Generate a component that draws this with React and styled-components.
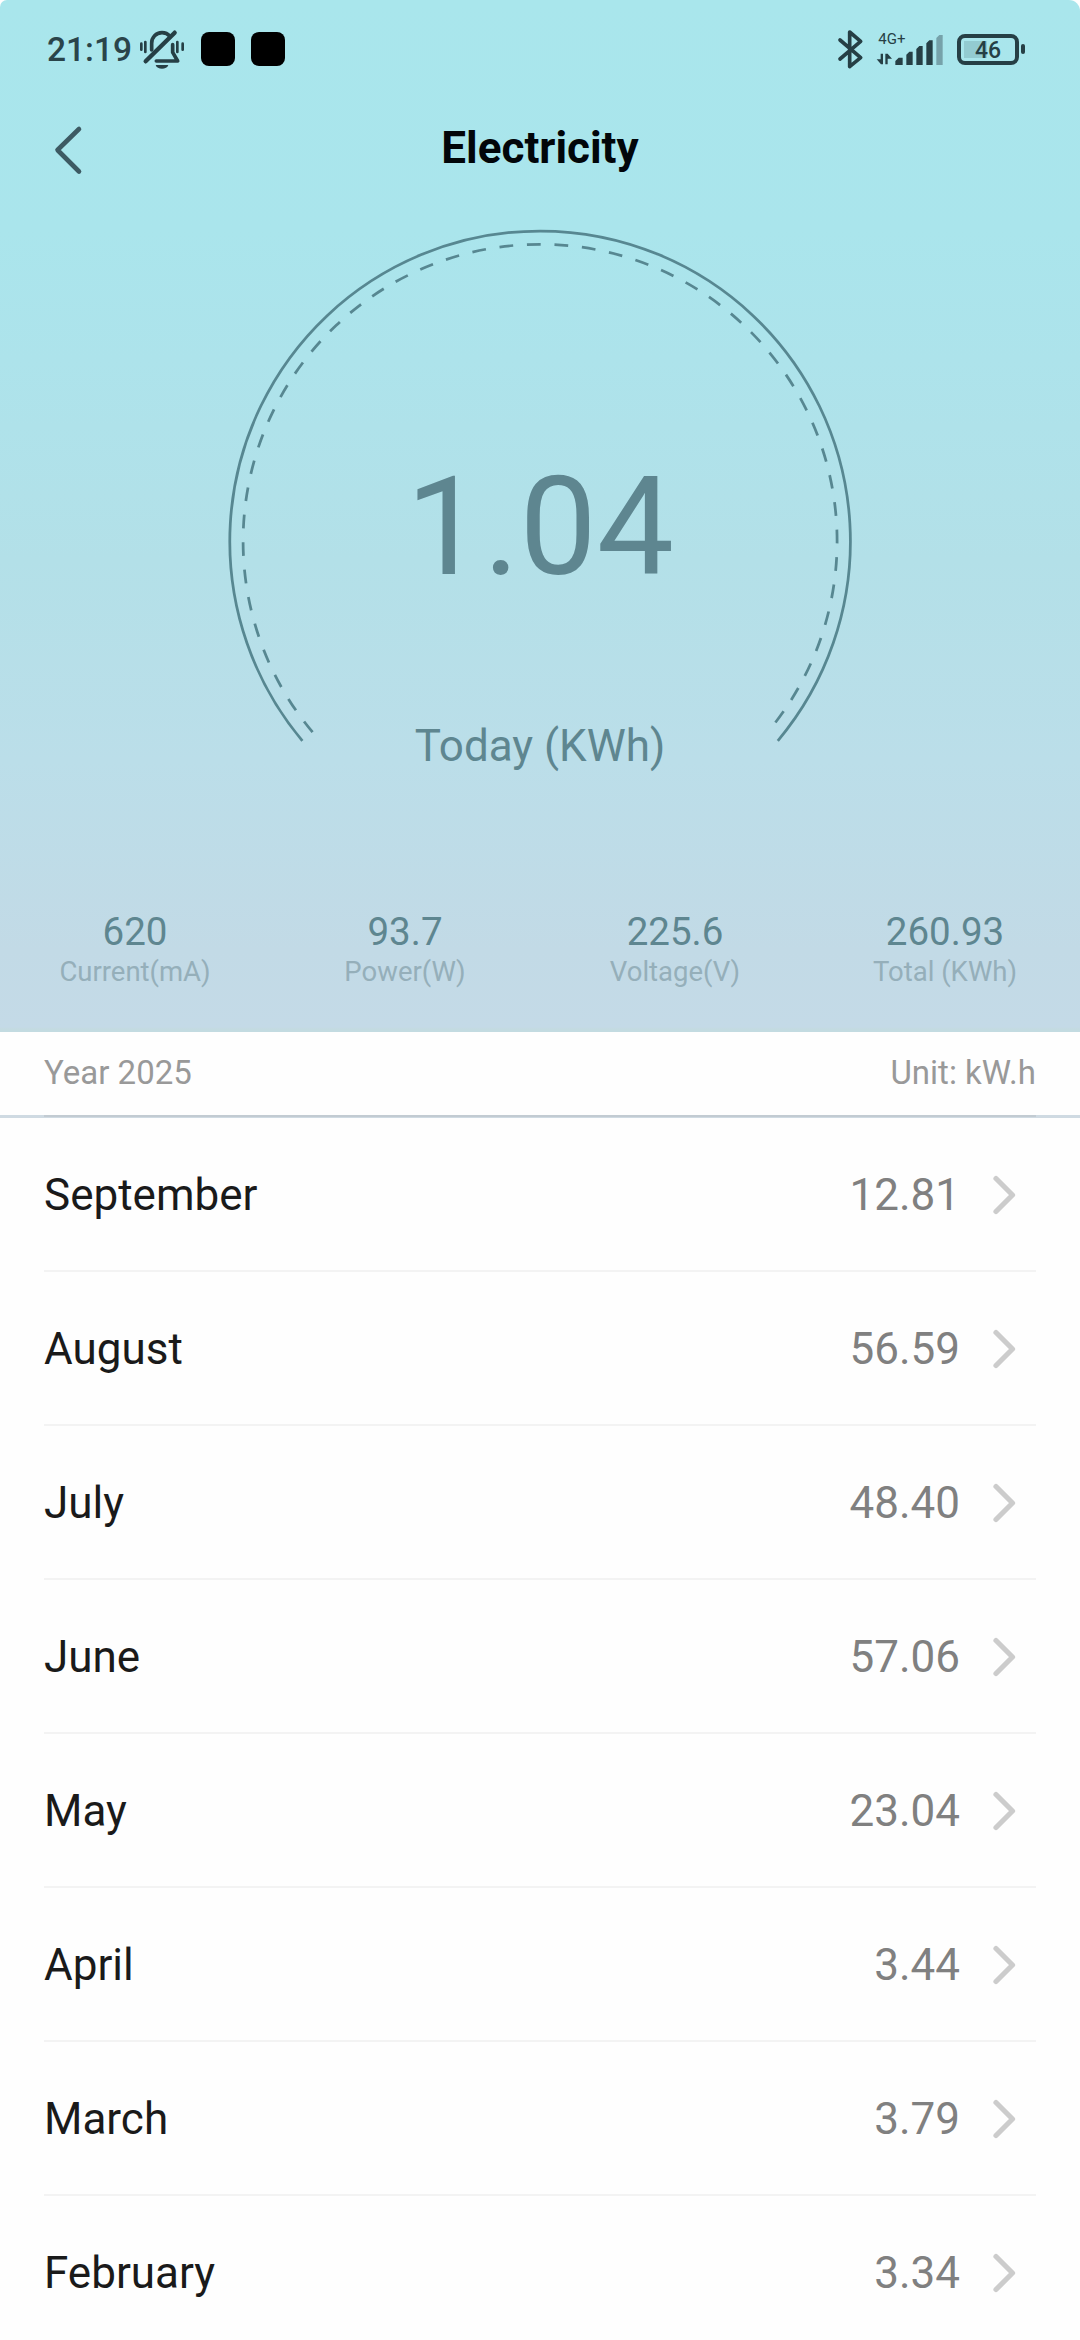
import React from 'react';
import styled, { createGlobalStyle } from 'styled-components';

const GlobalStyle = createGlobalStyle`
    body {
        margin: 0;
        background: #ffffff;
        font-family: Roboto, "Noto Sans", sans-serif;
    }
`;

const Screen = styled.div`
    width: 1080px;
    height: 2340px;
    overflow: hidden;
    background: #fefefe;
`;

const Hero = styled.header`
    display: flex;
    flex-direction: column;
    height: 1032px;
    border-radius: 7px 11px 0 0;
    background: linear-gradient(#a9e6ec 0, #aae5ec 230px, #ade3eb 360px, #b3e0e8 560px, #bbdee9 760px, #c2dae6 950px, #c4dae7 1027px, #c3dbe1 1029px);
`;

const StatusBar = styled.div`
    display: flex;
    justify-content: space-between;
    align-items: center;
    height: 98px;
    padding: 0 55px 0 47px;
    box-sizing: border-box;
`;

const StatusGroup = styled.div`
    display: flex;
    align-items: center;
`;

const Clock = styled.span`
    width: 92px;
    padding-top: 2px;
    font-size: 33.5px;
    font-weight: 500;
    line-height: 40px;
    color: #2a444a;
`;

const NotificationDot = styled.span`
    width: 34px;
    height: 34px;
    margin-left: 16px;
    border-radius: 8px;
    background: #000000;
`;

const StatusIcon = styled.svg`
    display: block;
    flex: none;
    overflow: visible;
    margin-left: ${(props) => props.$gap || 0}px;
`;

const Battery = styled.div`
    display: flex;
    align-items: center;
    margin-left: 13px;
`;

const BatteryBody = styled.div`
    width: 62px;
    height: 31px;
    box-sizing: border-box;
    border: 4px solid #263f45;
    border-radius: 8px;
    padding: 3px;
    font-size: 23px;
    font-weight: 500;
    line-height: 19px;
    text-align: center;
    color: #263f45;
    background: linear-gradient(#93cbd1, #93cbd1) 3px 3px / 23px 17px no-repeat;
`;

const BatteryTip = styled.div`
    width: 4px;
    height: 10px;
    margin-left: 2px;
    border-radius: 2px;
    background: #263f45;
`;

const TitleBar = styled.div`
    display: grid;
    grid-template-columns: 136px 1fr 136px;
    align-items: center;
    height: 100px;
`;

const BackButton = styled.button`
    display: flex;
    height: 100px;
    padding: 27px 0 0 53px;
    border: 0;
    background: none;
`;

const Title = styled.h1`
    margin: 0;
    font-size: 44px;
    font-weight: 700;
    line-height: 52px;
    text-align: center;
    color: #02060a;
`;

const Gauge = styled.div`
    display: grid;
    width: 626px;
    height: 681px;
    margin: 31px auto 0;

    > * {
        grid-area: 1 / 1;
    }
`;

const GaugeText = styled.div`
    padding-top: 218px;
    text-align: center;
    color: #5e8690;
`;

const Reading = styled.div`
    font-size: 137.5px;
    line-height: 160px;
`;

const ReadingLabel = styled.div`
    margin-top: 113px;
    font-size: 44px;
    line-height: 52px;
`;

const Stats = styled.div`
    display: grid;
    grid-template-columns: repeat(4, 1fr);
    text-align: center;
`;

const StatValue = styled.div`
    font-size: 38.5px;
    line-height: 44px;
    color: #5e8690;
`;

const StatLabel = styled.div`
    font-size: 27.5px;
    line-height: 36px;
    color: #95afba;
`;

const YearBar = styled.div`
    display: flex;
    justify-content: space-between;
    height: 83px;
    padding: 0 44px;
    font-size: 33px;
    line-height: 81px;
    color: #999999;
`;

const Divider = styled.div`
    height: 3px;
    padding: 0 44px;
    background: #cfdae2;

    &::after {
        content: '';
        display: block;
        height: 2px;
        background: #c2cbd2;
    }
`;

const MonthList = styled.ul`
    margin: 0;
    padding: 0 44px;
    list-style: none;
`;

const MonthRow = styled.li`
    display: flex;
    align-items: center;
    height: 154px;
    font-size: 44px;
    box-shadow: inset 0 -2px #f3f3f3;
`;

const MonthName = styled.span`
    flex: 1;
    color: #1a1a1a;
`;

const MonthValue = styled.span`
    margin-right: 32px;
    color: #808080;
`;

const Chevron = styled.svg`
    display: block;
    margin-right: 20px;
`;

const stats = [
    { value: '620', label: 'Current(mA)' },
    { value: '93.7', label: 'Power(W)' },
    { value: '225.6', label: 'Voltage(V)' },
    { value: '260.93', label: 'Total (KWh)' },
];

const months = [
    { name: 'September', value: '12.81' },
    { name: 'August', value: '56.59' },
    { name: 'July', value: '48.40' },
    { name: 'June', value: '57.06' },
    { name: 'May', value: '23.04' },
    { name: 'April', value: '3.44' },
    { name: 'March', value: '3.79' },
    { name: 'February', value: '3.34' },
];

function MutedBellIcon() {
    return (
        <StatusIcon width="46" height="39" viewBox="0 0 138 117" fill="none" stroke="#263f45" strokeLinecap="round" strokeLinejoin="round">
            <path d="M7 41v18M19 36v30M115 36v30M131 41v18" strokeWidth="8" />
            <path d="M38 60V40c0-18 13-32 31-32 10 0 18 4 24 11" strokeWidth="11" />
            <path d="M101 44v23l15 26H52" strokeWidth="11" />
            <path d="M20 94 107 8" strokeWidth="13" />
            <path d="M50 105h38c-4 15-34 15-38 0z" fill="#263f45" stroke="none" />
        </StatusIcon>
    );
}

function BluetoothIcon() {
    return (
        <StatusIcon width="27" height="40" viewBox="0 0 81 120" fill="none" stroke="#263f45" strokeWidth="11" strokeLinecap="round" strokeLinejoin="round">
            <path d="M9 33 71 86 38 113V9L71 37 9 90" />
        </StatusIcon>
    );
}

function SignalIcon() {
    return (
        <StatusIcon $gap={12} width="68" height="44" viewBox="0 -15 204 132" fill="#263f45">
            <text x="7" y="37" fontSize="45">4G+</text>
            <path d="M21 65v32h-6L2 82h12V65zM28 97V65h7l13 15H35v17z" />
            <path d="M58 99V87l10-10h12v22zM91 99V68l9-9h10v40zM121 99V51l9-9h10v57zM151 99V34l9-9h10v74z" />
            <path d="M181 99V18l9-9h10v90z" fill="#76a2aa" />
        </StatusIcon>
    );
}

function GaugeArc() {
    return (
        <svg width="626" height="530" viewBox="0 0 626 530" fill="none" stroke="#578791" strokeWidth="2.75">
            <path d="M75.4 511.8A310.3 310.3 0 1 1 550.8 511.8" />
            <path d="M85.6 503.2A297 297 0 1 1 540.6 503.2" strokeDasharray="13.76" />
        </svg>
    );
}

export default function App() {
    return (
        <Screen>
            <GlobalStyle />
            <Hero>
                <StatusBar>
                    <StatusGroup>
                        <Clock>21:19</Clock>
                        <MutedBellIcon />
                        <NotificationDot />
                        <NotificationDot />
                    </StatusGroup>
                    <StatusGroup>
                        <BluetoothIcon />
                        <SignalIcon />
                        <Battery>
                            <BatteryBody>46</BatteryBody>
                            <BatteryTip />
                        </Battery>
                    </StatusGroup>
                </StatusBar>
                <TitleBar>
                    <BackButton aria-label="Back">
                        <svg width="30" height="50" viewBox="0 0 30 50" fill="none" stroke="#3d5a63" strokeWidth="4.6" strokeLinecap="round" strokeLinejoin="round">
                            <path d="M26 4 4.500 25 26 46.500" />
                        </svg>
                    </BackButton>
                    <Title>Electricity</Title>
                </TitleBar>
                <Gauge>
                    <GaugeArc />
                    <GaugeText>
                        <Reading>1.04</Reading>
                        <ReadingLabel>Today (KWh)</ReadingLabel>
                    </GaugeText>
                </Gauge>
                <Stats>
                    {stats.map((stat) => (
                        <div key={stat.label}>
                            <StatValue>{stat.value}</StatValue>
                            <StatLabel>{stat.label}</StatLabel>
                        </div>
                    ))}
                </Stats>
            </Hero>
            <YearBar>
                <span>Year 2025</span>
                <span>Unit: kW.h</span>
            </YearBar>
            <Divider />
            <MonthList>
                {months.map((month) => (
                    <MonthRow key={month.name}>
                        <MonthName>{month.name}</MonthName>
                        <MonthValue>{month.value}</MonthValue>
                        <Chevron width="24" height="40" viewBox="0 0 24 40" fill="none" stroke="#cccccc" strokeWidth="5.2" strokeLinecap="round" strokeLinejoin="round">
                            <path d="M4 3.500 20.500 20 4 36.500" />
                        </Chevron>
                    </MonthRow>
                ))}
            </MonthList>
        </Screen>
    );
}
